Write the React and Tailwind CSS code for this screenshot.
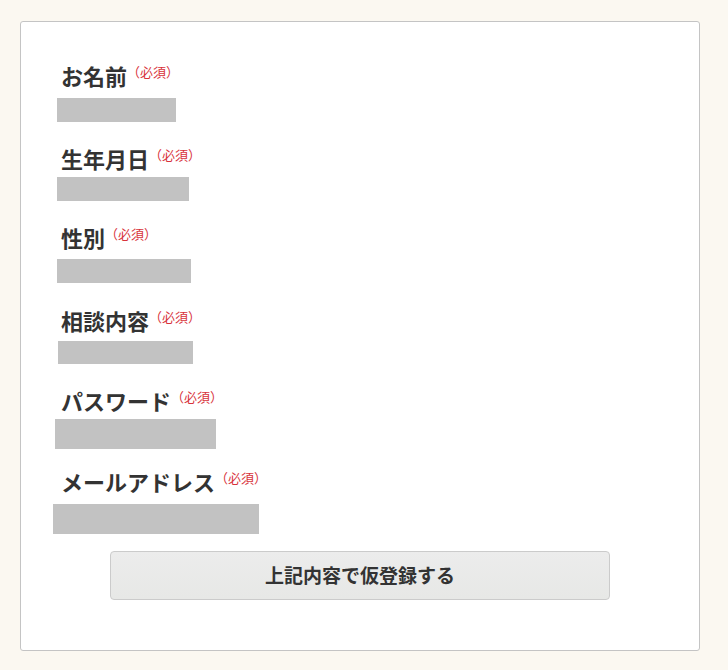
import React from "react";

const fields = [
  { label: "お名前", mt: "mt-0", gap: "mb-[7px]", bar: "w-[119px] h-[24px] ml-[4px]" },
  { label: "生年月日", mt: "mt-[24px]", gap: "mb-[3px]", bar: "w-[132px] h-[24px] ml-[4px]" },
  { label: "性別", mt: "mt-[24px]", gap: "mb-[6px]", bar: "w-[134px] h-[24px] ml-[4px]" },
  { label: "相談内容", mt: "mt-[25px]", gap: "mb-[5px]", bar: "w-[135px] h-[23px] ml-[5px]" },
  { label: "パスワード", mt: "mt-[24px]", gap: "mb-[3px]", bar: "w-[161px] h-[30px] ml-[2px]" },
  { label: "メールアドレス", mt: "mt-[20px]", gap: "mb-[7px]", bar: "w-[206px] h-[30px] ml-0" },
];

export default function App() {
  return (
    <div
      className="min-h-[670px] w-full bg-[#fbf8f1] pt-[21px]"
      style={{ fontFamily: '"Noto Sans CJK JP", "Noto Sans", sans-serif' }}
    >
      <div className="ml-[20px] w-[680px] h-[630px] rounded-[3px] border border-[#c4c4c4] bg-white pl-[32px] pr-[32px] pt-[41px]">
        {fields.map((f) => (
          <div key={f.label} className={f.mt}>
            <div className={`flex h-[28px] items-start pl-[8px] ${f.gap}`}>
              <span className="text-[22px] font-bold leading-[25px] text-[#333333]">{f.label}</span>
              <span className="ml-0 mt-[1px] text-[13px] leading-[16px] text-[#d8333b]">（必須）</span>
            </div>
            <div className={`bg-[#c2c2c2] ${f.bar}`} />
          </div>
        ))}
        <div className="mt-[17px] flex justify-center">
          <button
            type="button"
            className="ml-[-32px] mr-[-32px] h-[49px] w-[500px] rounded-[4px] border border-[#cbcbcb] bg-gradient-to-b from-[#ececec] to-[#e7e8e6] text-[19px] font-bold text-[#333333]"
          >
            上記内容で仮登録する
          </button>
        </div>
      </div>
    </div>
  );
}
